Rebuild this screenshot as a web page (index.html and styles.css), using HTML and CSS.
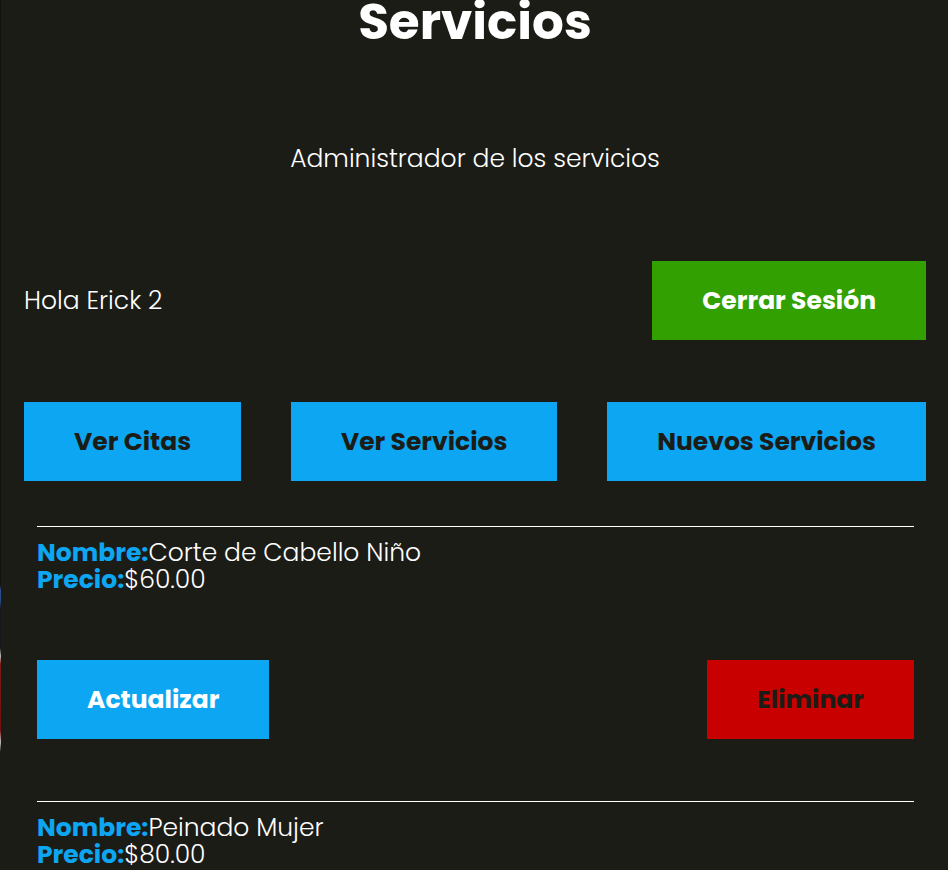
FILE: index.html
```html
<!DOCTYPE html>
<html lang="es">
<head>
<meta charset="UTF-8">
<title>Servicios</title>
<link rel="stylesheet" href="styles.css">
</head>
<body>
<div class="page">
  <div class="page__side"></div>
  <main class="app">
    <h1 class="app__title">Servicios</h1>
    <p class="app__desc">Administrador de los servicios</p>

    <div class="barra">
      <p class="barra__saludo">Hola Erick 2</p>
      <a class="boton boton--verde" href="#">Cerrar Sesión</a>
    </div>

    <nav class="barra-servicios">
      <a class="boton boton--azul" href="#">Ver Citas</a>
      <a class="boton boton--azul" href="#">Ver Servicios</a>
      <a class="boton boton--azul" href="#">Nuevos Servicios</a>
    </nav>

    <ul class="servicios">
      <li class="servicio">
        <p class="servicio__dato"><span class="servicio__label">Nombre:</span>Corte de Cabello Niño</p>
        <p class="servicio__dato"><span class="servicio__label">Precio:</span>$60.00</p>
        <div class="servicio__acciones">
          <a class="boton boton--actualizar" href="#">Actualizar</a>
          <a class="boton boton--eliminar" href="#">Eliminar</a>
        </div>
      </li>
      <li class="servicio">
        <p class="servicio__dato"><span class="servicio__label">Nombre:</span>Peinado Mujer</p>
        <p class="servicio__dato"><span class="servicio__label">Precio:</span>$80.00</p>
        <div class="servicio__acciones">
          <a class="boton boton--actualizar" href="#">Actualizar</a>
          <a class="boton boton--eliminar" href="#">Eliminar</a>
        </div>
      </li>
    </ul>
  </main>
</div>
</body>
</html>
```
FILE: styles.css
```css
* { box-sizing: border-box; }
html, body { margin: 0; padding: 0; }
body {
  background: #1c1c17;
  color: #ffffff;
  font-family: "Poppins", "Open Sans", "Liberation Sans", sans-serif;
  font-weight: 300;
  font-size: 25px;
  height: 870px;
  overflow: hidden;
}
.page {
  display: flex;
  min-height: 870px;
}
.page__side {
  width: 1px;
  flex: 0 0 1px;
  background: linear-gradient(to bottom,
    #121210 0, #121210 585px,
    #2c4c8c 590px, #2c4c8c 600px,
    #15151a 610px, #15151a 648px,
    #bdbdbd 656px, #7a1a1a 664px,
    #6e1010 730px, #c0c0c0 742px,
    #1c1c17 752px, #1c1c17 100%);
}
.app {
  flex: 1;
  padding: 0 22px 0 23px;
}
.app__title {
  margin: -4px 0 0;
  font-size: 50px;
  line-height: 52px;
  font-weight: 700;
  text-align: center;
}
.app__desc {
  margin: 98px 0 0;
  text-align: center;
  line-height: 26px;
}
.barra {
  margin-top: 89px;
  display: flex;
  justify-content: space-between;
  align-items: center;
}
.barra__saludo {
  margin: 0;
  line-height: 26px;
}
.boton {
  display: inline-block;
  padding: 27px 50px;
  line-height: 25px;
  font-size: 25px;
  font-weight: 700;
  text-decoration: none;
  text-align: center;
}
.boton--verde { background: #32a000; color: #ffffff; }
.boton--azul { background: #0da6f2; color: #1c1c17; }
.boton--actualizar { background: #0da6f2; color: #ffffff; }
.boton--eliminar { background: #c80000; color: #1c1c17; }
.barra-servicios {
  margin-top: 62px;
  display: flex;
  justify-content: space-between;
}
.servicios {
  list-style: none;
  margin: 45px 12px 0 13px;
  padding: 0;
}
.servicio {
  border-top: 1px solid #ffffff;
  padding: 12px 0 62px;
}
.servicio__dato {
  margin: 0;
  line-height: 27px;
}
.servicio__label {
  color: #0da6f2;
  font-weight: 700;
}
.servicio__acciones {
  margin-top: 67px;
  display: flex;
  justify-content: space-between;
}
```
